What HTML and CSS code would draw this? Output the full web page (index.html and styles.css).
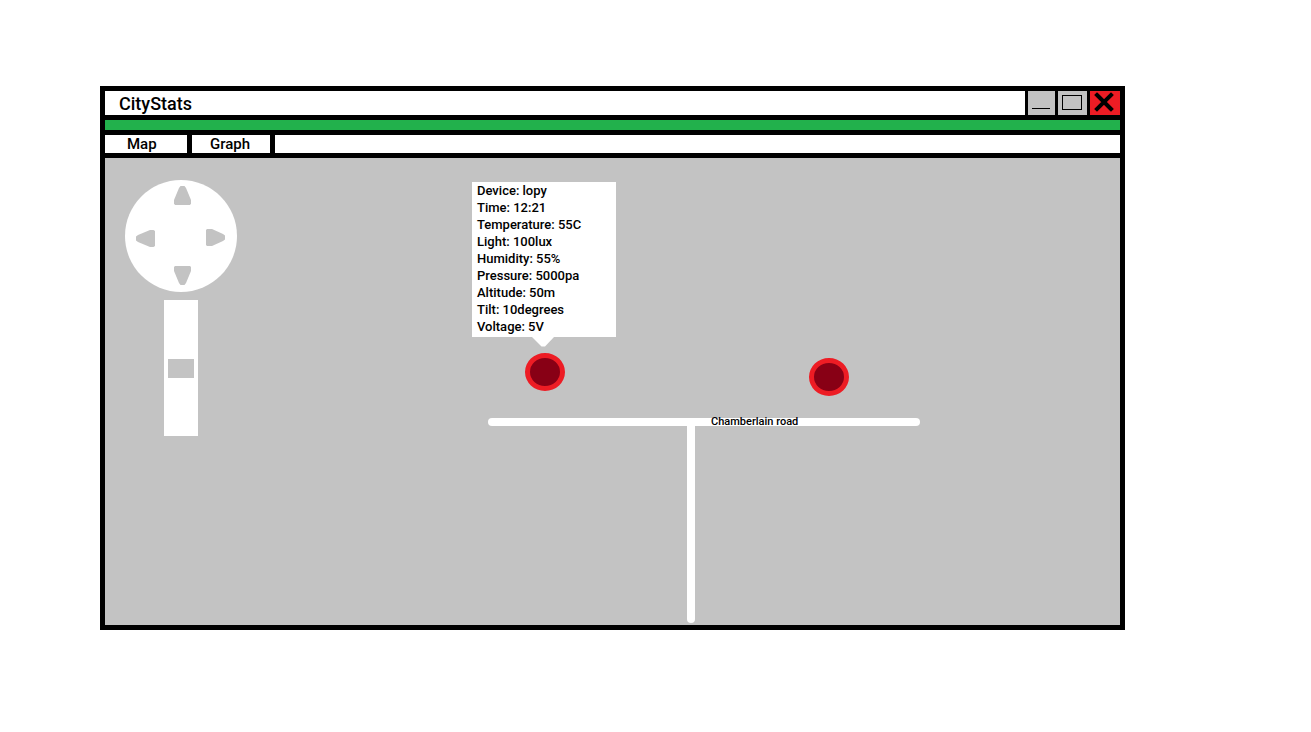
FILE: index.html
```html
<!DOCTYPE html>
<html lang="en">
<head>
<meta charset="utf-8">
<title>CityStats</title>
<link rel="stylesheet" href="styles.css">
</head>
<body>
<main class="window">
  <header class="titlebar">
    <h1 class="title">CityStats</h1>
    <button class="control minimize" type="button" aria-label="Minimize">
      <svg width="27" height="24" viewBox="0 0 27 24" shape-rendering="crispEdges"><path d="M4 17.500H22" stroke="#000"/></svg>
    </button>
    <button class="control maximize" type="button" aria-label="Maximize">
      <svg width="29" height="24" viewBox="0 0 29 24" shape-rendering="crispEdges"><rect x="4.500" y="4.500" width="19" height="14" fill="none" stroke="#000"/></svg>
    </button>
    <button class="control close" type="button" aria-label="Close">
      <svg width="30" height="24" viewBox="0 0 30 24"><path d="M7 4L21 18M21 4L7 18" stroke="#000" stroke-width="4" stroke-linecap="square"/></svg>
    </button>
  </header>
  <div class="accent"></div>
  <nav class="tabs">
    <button class="tab tab-map" type="button">Map</button>
    <button class="tab tab-graph" type="button">Graph</button>
  </nav>
  <section class="map" aria-label="Map">
    <div class="pan">
      <button class="arrow north" type="button" aria-label="Pan up"><svg width="17" height="19" viewBox="0 0 17 19"><path d="M6.500 0H10.500L12 2L17 14V17.500L16 19H1L0 17.500V14L5 2Z"/></svg></button>
      <button class="arrow west" type="button" aria-label="Pan left"><svg width="19" height="17" viewBox="0 0 19 17"><path d="M0 6.500V10.500L2 12L14 17H17.500L19 16V1L17.500 0H14L2 5Z"/></svg></button>
      <button class="arrow east" type="button" aria-label="Pan right"><svg width="19" height="17" viewBox="0 0 19 17"><path d="M19 6.500V10.500L17 12L6 17H1L0 16V1L1 0H6L17 5Z"/></svg></button>
      <button class="arrow south" type="button" aria-label="Pan down"><svg width="17" height="19" viewBox="0 0 17 19"><path d="M6.500 19H10.500L12 17L17 5V1L16 0H1L0 1V5L5 17Z"/></svg></button>
    </div>
    <input class="zoom" type="range" min="0" max="100" value="50" aria-label="Zoom">
    <div class="road road-across"></div>
    <div class="road road-down"></div>
    <span class="road-name">Chamberlain road</span>
    <button class="marker marker-one" type="button" aria-label="Device lopy"></button>
    <button class="marker marker-two" type="button" aria-label="Second device"></button>
    <div class="popup">
      <ul class="readings">
        <li>Device: lopy</li>
        <li>Time: 12:21</li>
        <li>Temperature: 55C</li>
        <li>Light: 100lux</li>
        <li>Humidity: 55%</li>
        <li>Pressure: 5000pa</li>
        <li>Altitude: 50m</li>
        <li>Tilt: 10degrees</li>
        <li>Voltage: 5V</li>
      </ul>
      <svg class="pointer" width="22" height="10" viewBox="0 0 22 10"><path d="M0 0H22L13 9.500H9.500Z" fill="#fff"/></svg>
    </div>
  </section>
</main>
</body>
</html>
```

FILE: styles.css
```css
* {
  box-sizing: border-box;
}

body {
  display: flex;
  min-height: 100vh;
  margin: 0;
  padding: 86px 186px 102px 100px;
  background: #fff;
  color: #000;
  font-family: Bahnschrift, Roboto, "Liberation Sans", sans-serif;
  font-weight: 500;
}

button {
  margin: 0;
  padding: 0;
  border: 0;
  color: inherit;
  font: inherit;
  cursor: pointer;
}

svg {
  display: block;
}

.window {
  display: flex;
  flex: 1;
  flex-direction: column;
  gap: 5px;
  border: 5px solid #000;
  background: #000;
}

.titlebar {
  display: flex;
  gap: 3px;
  height: 24px;
}

.title {
  flex: 1;
  margin: 0;
  padding-left: 14px;
  background: #fff;
  font-size: 18px;
  font-weight: 500;
  line-height: 25px;
}

.control {
  background: #c3c3c3;
}

.close {
  background: #ed1c24;
}

.accent {
  height: 10px;
  background: #22b14c;
}

.tabs {
  display: flex;
  gap: 5px;
  height: 18px;
}

.tabs::after {
  flex: 1;
  background: #fff;
  content: "";
}

.tab {
  background: #fff;
  font-size: 15px;
  line-height: 18px;
  text-align: left;
}

.tab-map {
  width: 82px;
  padding-left: 22px;
}

.tab-graph {
  width: 78px;
  padding-left: 18px;
}

.map {
  position: relative;
  flex: 1;
  min-height: 300px;
  overflow: hidden;
  background: #c3c3c3;
}

.pan {
  position: absolute;
  top: 22px;
  left: 20px;
  width: 112px;
  height: 112px;
  border-radius: 50%;
  background: #fff;
}

.arrow {
  position: absolute;
  background: none;
  fill: #c3c3c3;
}

.north {
  top: 6px;
  left: 49px;
}

.west {
  top: 50px;
  left: 11px;
}

.east {
  top: 49px;
  left: 81px;
}

.south {
  top: 86px;
  left: 49px;
}

.zoom {
  position: absolute;
  top: 142px;
  left: 59px;
  width: 34px;
  height: 136px;
  margin: 0;
  appearance: none;
  background: #fff;
  writing-mode: vertical-lr;
}

.zoom::-webkit-slider-thumb {
  width: 26px;
  height: 19px;
  appearance: none;
  background: #c3c3c3;
}

.road {
  position: absolute;
  border-radius: 4px;
  background: #fff;
}

.road-across {
  top: 260px;
  left: 383px;
  width: 432px;
  height: 8px;
}

.road-down {
  top: 260px;
  bottom: 2px;
  left: 582px;
  width: 8px;
}

.road-name {
  position: absolute;
  top: 258px;
  left: 606px;
  font-size: 11px;
  line-height: 12px;
  white-space: nowrap;
}

.marker {
  position: absolute;
  width: 40px;
  height: 38px;
  border: 5px solid #ed1c24;
  border-radius: 50%;
  background: #880015;
}

.marker-one {
  top: 195px;
  left: 420px;
}

.marker-two {
  top: 200px;
  left: 704px;
}

.popup {
  position: absolute;
  top: 24px;
  left: 367px;
  width: 144px;
  padding: 0 5px 2px;
  background: #fff;
}

.readings {
  margin: 0;
  padding: 0;
  font-size: 13px;
  line-height: 17px;
  list-style: none;
}

.pointer {
  position: absolute;
  top: 100%;
  left: 60px;
}
```
